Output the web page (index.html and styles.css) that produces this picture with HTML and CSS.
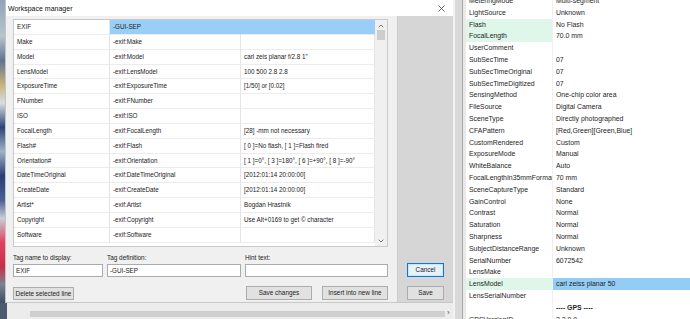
FILE: index.html
```html
<!DOCTYPE html>
<html>
<head>
<meta charset="utf-8">
<link rel="stylesheet" href="styles.css">
</head>
<body>
<div class="screen">
  <div class="leftcol">
    <div class="toprow">
      <div class="desk"></div>
      <div class="dialog">
        <div class="titlebar">
          <span class="title">Workspace manager</span>
          <svg class="close" width="7" height="7" viewBox="0 0 7 7"><path d="M0.5 0.5L6.5 6.5M6.5 0.5L0.5 6.5" stroke="#444" stroke-width="0.8" fill="none"/></svg>
        </div>
        <div class="dbody">
          <div class="main">
            <div class="table">
              <div class="grid">
                <div class="c">EXIF</div><div class="c sel">-GUI-SEP</div><div class="c sel"></div>
                <div class="c">Make</div><div class="c">-exif:Make</div><div class="c"></div>
                <div class="c">Model</div><div class="c">-exif:Model</div><div class="c">carl zeis planar f/2.8 1"</div>
                <div class="c">LensModel</div><div class="c">-exif:LensModel</div><div class="c">100 500 2.8 2.8</div>
                <div class="c">ExposureTime</div><div class="c">-exif:ExposureTime</div><div class="c">[1/50] or [0.02]</div>
                <div class="c">FNumber</div><div class="c">-exif:FNumber</div><div class="c"></div>
                <div class="c">ISO</div><div class="c">-exif:ISO</div><div class="c"></div>
                <div class="c">FocalLength</div><div class="c">-exif:FocalLength</div><div class="c">[28] -mm not necessary</div>
                <div class="c">Flash#</div><div class="c">-exif:Flash</div><div class="c">[ 0 ]=No flash, [ 1 ]=Flash fired</div>
                <div class="c">Orientation#</div><div class="c">-exif:Orientation</div><div class="c">[ 1 ]=0°, [ 3 ]=180°, [ 6 ]=+90°, [ 8 ]=-90°</div>
                <div class="c">DateTimeOriginal</div><div class="c">-exif:DateTimeOriginal</div><div class="c">[2012:01:14 20:00:00]</div>
                <div class="c">CreateDate</div><div class="c">-exif:CreateDate</div><div class="c">[2012:01:14 20:00:00]</div>
                <div class="c">Artist*</div><div class="c">-exif:Artist</div><div class="c">Bogdan Hrastnik</div>
                <div class="c">Copyright</div><div class="c">-exif:Copyright</div><div class="c">Use Alt+0169 to get © character</div>
                <div class="c">Software</div><div class="c">-exif:Software</div><div class="c"></div>
              </div>
              <div class="vscroll">
                <svg class="arrow" width="6" height="4" viewBox="0 0 6 4"><path d="M0.7 3.3L3 1L5.3 3.3" stroke="#555" stroke-width="0.8" fill="none"/></svg>
                <div class="thumb"></div>
                <div class="track"></div>
                <svg class="arrow" width="6" height="4" viewBox="0 0 6 4"><path d="M0.7 0.7L3 3L5.3 0.7" stroke="#555" stroke-width="0.8" fill="none"/></svg>
              </div>
            </div>
            <div class="fields">
              <div class="field f1"><span class="lbl">Tag name to display:</span><div class="input">EXIF</div></div>
              <div class="field f2"><span class="lbl">Tag definition:</span><div class="input">-GUI-SEP</div></div>
              <div class="field f3"><span class="lbl">Hint text:</span><div class="input"></div></div>
            </div>
            <div class="buttons">
              <div class="btn del">Delete selected line</div>
              <div class="spacer"></div>
              <div class="btn wide">Save changes</div>
              <div class="btn wide">Insert into new line</div>
            </div>
          </div>
          <div class="side">
            <div class="btn small default">Cancel</div>
            <div class="btn small">Save</div>
          </div>
        </div>
      </div>
    </div>
    <div class="under">
      <div class="under-left"></div>
      <div class="hbar"></div>
      <span class="harrow">›</span>
    </div>
  </div>
  <div class="divider"></div>
  <div class="props">
    <div class="plist">
      <div class="pn">MeteringMode</div><div class="pv">Multi-segment</div>
      <div class="pn">LightSource</div><div class="pv">Unknown</div>
      <div class="pn hl">Flash</div><div class="pv">No Flash</div>
      <div class="pn hl">FocalLength</div><div class="pv">70.0 mm</div>
      <div class="pn">UserComment</div><div class="pv"></div>
      <div class="pn">SubSecTime</div><div class="pv">07</div>
      <div class="pn">SubSecTimeOriginal</div><div class="pv">07</div>
      <div class="pn">SubSecTimeDigitized</div><div class="pv">07</div>
      <div class="pn">SensingMethod</div><div class="pv">One-chip color area</div>
      <div class="pn">FileSource</div><div class="pv">Digital Camera</div>
      <div class="pn">SceneType</div><div class="pv">Directly photographed</div>
      <div class="pn">CFAPattern</div><div class="pv">[Red,Green][Green,Blue]</div>
      <div class="pn">CustomRendered</div><div class="pv">Custom</div>
      <div class="pn">ExposureMode</div><div class="pv">Manual</div>
      <div class="pn">WhiteBalance</div><div class="pv">Auto</div>
      <div class="pn">FocalLengthIn35mmFormat</div><div class="pv">70 mm</div>
      <div class="pn">SceneCaptureType</div><div class="pv">Standard</div>
      <div class="pn">GainControl</div><div class="pv">None</div>
      <div class="pn">Contrast</div><div class="pv">Normal</div>
      <div class="pn">Saturation</div><div class="pv">Normal</div>
      <div class="pn">Sharpness</div><div class="pv">Normal</div>
      <div class="pn">SubjectDistanceRange</div><div class="pv">Unknown</div>
      <div class="pn">SerialNumber</div><div class="pv">6072542</div>
      <div class="pn">LensMake</div><div class="pv"></div>
      <div class="pn hl">LensModel</div><div class="pv psel">carl zeiss planar 50</div>
      <div class="pn">LensSerialNumber</div><div class="pv"></div>
      <div class="pn"></div><div class="pv bold">---- GPS ----</div>
      <div class="pn">GPSVersionID</div><div class="pv">2.2.0.0</div>
    </div>
  </div>
</div>
</body>
</html>
```
FILE: styles.css
```css
* { box-sizing: border-box; }
html, body { margin: 0; padding: 0; }
body {
  width: 690px;
  height: 319px;
  overflow: hidden;
  background: #fff;
  font-family: "Liberation Sans", Arial, sans-serif;
  color: #1a1a1a;
}
.screen {
  display: flex;
  width: 690px;
  height: 319px;
}
.leftcol {
  width: 453px;
  display: flex;
  flex-direction: column;
}
.toprow {
  display: flex;
  height: 303px;
}
.desk {
  width: 5px;
  background: linear-gradient(to bottom, #8fa4b8 0%, #b8c4cc 12%, #5f7390 20%, #c9b47a 28%, #d7dde2 34%, #2c4476 42%, #9fb2c8 50%, #2a3d73 58%, #4a5f94 66%, #c8ced8 72%, #e0425f 80%, #c93048 88%, #7a8490 94%, #3d4b66 100%);
}
.dialog {
  width: 448px;
  display: flex;
  flex-direction: column;
  background: #f0f0f0;
  border-left: 1px solid #c4c4c4;
  border-bottom: 1px solid #c8c8c8;
}
.titlebar {
  height: 16px;
  background: #fff;
  display: flex;
  align-items: center;
  justify-content: space-between;
  padding: 0 8px 0 2px;
  flex: none;
}
.title {
  font-size: 7px;
  color: #111;
}
.close { display: block; }
.dbody {
  flex: 1;
  display: flex;
}
.main {
  width: 391px;
  padding: 3px 0 0 7px;
  display: flex;
  flex-direction: column;
}
.table {
  width: 375px;
  height: 228px;
  border: 1px solid #c9c9c9;
  background: #fff;
  display: flex;
}
.grid {
  display: grid;
  grid-template-columns: 96px 131px 134px;
  grid-auto-rows: 14.85px;
  align-content: start;
}
.c {
  font-size: 6.3px;
  line-height: 13.85px;
  padding-left: 3px;
  border-right: 1px solid #e4e4e4;
  border-bottom: 1px solid #ececec;
  white-space: nowrap;
  overflow: hidden;
  color: #222;
}
.c.sel { background: #99cff6; border-right-color: #99cff6; }
.vscroll {
  width: 12px;
  background: #f0f0f0;
  display: flex;
  flex-direction: column;
  align-items: center;
  padding: 4px 0 3px;
}
.arrow { display: block; flex: none; }
.thumb {
  width: 8px;
  height: 10px;
  margin-top: 2px;
  background: #cdcdcd;
}
.track { flex: 1; }
.fields {
  display: flex;
  gap: 4px;
  margin-top: 6px;
}
.field {
  display: flex;
  flex-direction: column;
}
.f1 { width: 90px; }
.f2 { width: 134px; }
.f3 { width: 143px; }
.lbl {
  font-size: 6.4px;
  line-height: 9px;
  height: 9px;
  color: #222;
}
.input {
  margin-top: 2px;
  height: 13px;
  background: #fff;
  border: 1px solid #a9abb0;
  font-size: 6.3px;
  line-height: 11px;
  padding-left: 2px;
  color: #222;
}
.buttons {
  display: flex;
  align-items: center;
  gap: 10px;
  margin-top: 9px;
  width: 375px;
}
.spacer { flex: 1; }
.btn {
  height: 14px;
  background: #e1e1e1;
  border: 1px solid #adadad;
  font-size: 6.4px;
  line-height: 12px;
  text-align: center;
  color: #222;
  white-space: nowrap;
}
.btn.del { width: 61px; height: 13px; line-height: 11px; }
.btn.wide { width: 66px; }
.side {
  width: 56px;
  background: #d6d6d6;
  border-left: 1px solid #cacaca;
  display: flex;
  flex-direction: column;
  justify-content: flex-end;
  gap: 9px;
  padding: 0 0 2px 9px;
}
.btn.small { width: 37px; }
.btn.default {
  border: 1px solid #0a78d7;
  background: #e5f1fb;
  box-shadow: inset 0 0 0 1px #cfe4f7;
}
.under {
  flex: 1;
  display: flex;
  align-items: center;
  background: #ececec;
  position: relative;
}
.under-left {
  width: 7px;
  align-self: stretch;
  background: #4d5a70;
}
.hbar {
  margin-left: 23px;
  width: 415px;
  height: 6px;
  margin-top: 6px;
  background: #cfcfcf;
}
.harrow {
  font-size: 8px;
  color: #555;
  margin-left: 2px;
  margin-top: 3px;
}
.divider {
  width: 10px;
  background: #d9d9d9;
  border-left: 2px solid #f2f2f2;
  border-right: 1px solid #a9a9a9;
}
.props {
  flex: 1;
  background: #fff;
  border-left: 3px solid #e9e9e9;
  overflow: hidden;
}
.plist {
  display: grid;
  grid-template-columns: 87px 1fr;
  grid-auto-rows: 11.8px;
  margin-top: -5px;
}
.pn, .pv {
  font-size: 6.9px;
  line-height: 11.8px;
  white-space: nowrap;
  overflow: hidden;
  color: #1e1e1e;
}
.pn { padding-left: 3px; border-right: 1px solid #f0f0f0; }
.pv { padding-left: 3px; }
.pn.hl { background: #dff6ea; }
.pv.psel { background: #93cdf5; }
.pv.bold { font-weight: bold; }
```
